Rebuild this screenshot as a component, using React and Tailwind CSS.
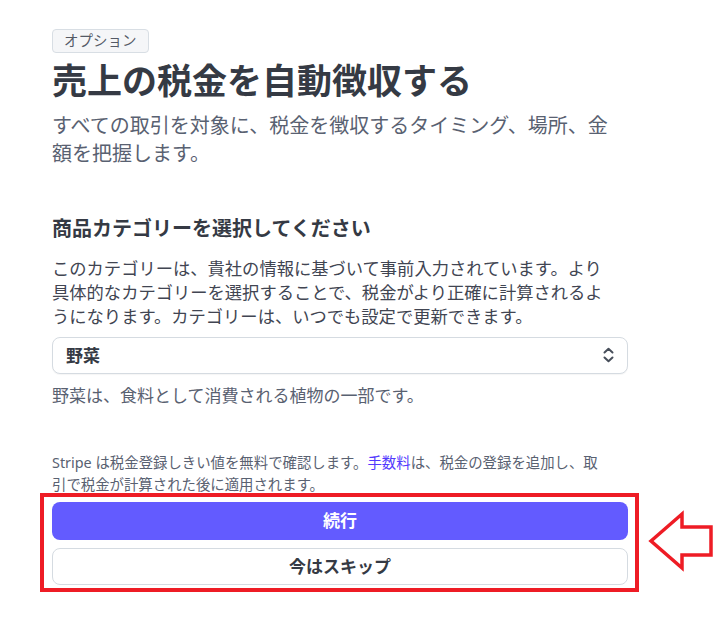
import React from 'react';

const font = { fontFamily: '"Noto Sans", "Noto Sans CJK JP", sans-serif' };

// up/down chevrons used by the select
const UpDownIcon = () => (
  <svg width="13" height="16" viewBox="0 0 13 16" fill="none" stroke="#474e5a" strokeWidth="2" strokeLinecap="round" strokeLinejoin="round">
    <path d="M2.5 5.5 6.5 1.8 10.5 5.5" />
    <path d="M2.5 10.5 6.5 14.2 10.5 10.5" />
  </svg>
);

const App = () => {
  return (
    <div className="relative w-[725px] h-[629px] bg-white overflow-hidden" style={font}>
      <div className="ml-[52px] w-[576px] pt-[28px] flex flex-col">
        <div>
          <span className="inline-flex items-center h-[24px] px-[11px] rounded-[4px] border border-[#d8dee4] bg-[#f5f6f8] text-[14.5px] text-[#545a66]">
            オプション
          </span>
        </div>

        <h1 className="mt-[8px] text-[35px] leading-[40px] font-bold text-[#353a44]">
          売上の税金を自動徴収する
        </h1>
        <p className="mt-[11px] w-[565px] text-[20px] leading-[28px] text-[#596171]">
          すべての取引を対象に、税金を徴収するタイミング、場所、金額を把握します。
        </p>

        <h2 className="mt-[47px] text-[20px] leading-[28px] font-bold text-[#353a44]">
          商品カテゴリーを選択してください
        </h2>
        <p className="mt-[14px] w-[565px] text-[17.3px] leading-[24px] text-[#414552]">
          このカテゴリーは、貴社の情報に基づいて事前入力されています。より具体的なカテゴリーを選択することで、税金がより正確に計算されるようになります。カテゴリーは、いつでも設定で更新できます。
        </p>

        <button className="mt-[8px] h-[37px] w-full flex items-center justify-between pl-[13px] pr-[12px] rounded-[8px] border border-[#d5dbe1] bg-white shadow-[0_1px_1px_rgba(0,0,0,0.04)]">
          <span className="text-[17px] font-bold text-[#353a44]">野菜</span>
          <UpDownIcon />
        </button>

        <p className="mt-[10px] text-[17px] leading-[24px] text-[#596171]">
          野菜は、食料として消費される植物の一部です。
        </p>

        <p className="mt-[44px] w-[556px] text-[14.4px] leading-[22px] text-[#596171]">
          Stripe は税金登録しきい値を無料で確認します。<span className="text-[#533afd]">手数料</span>は、税金の登録を追加し、取引で税金が計算された後に適用されます。
        </p>

        <div className="mt-[6px] flex flex-col gap-[8px]">
          <button className="h-[38px] w-full rounded-[8px] bg-[#635bff] text-white text-[17px] font-bold">
            続行
          </button>
          <button className="h-[37px] w-full rounded-[8px] border border-[#d5dbe1] bg-white text-[#353a44] text-[17px] font-bold">
            今はスキップ
          </button>
        </div>
      </div>

      {/* annotation overlay */}
      <div className="absolute left-[40px] top-[493px] w-[599px] h-[99px] border-[4px] border-[#ee1c25]" />
      <svg className="absolute left-[645px] top-[508px]" width="72" height="66" viewBox="645 508 72 66">
        <path d="M651 541 L682 514 L682 527 L711 527 L711 555 L682 555 L682 568 Z" fill="white" stroke="#ee1c25" strokeWidth="3.5" strokeLinejoin="miter" />
      </svg>
    </div>
  );
};

export default App;
